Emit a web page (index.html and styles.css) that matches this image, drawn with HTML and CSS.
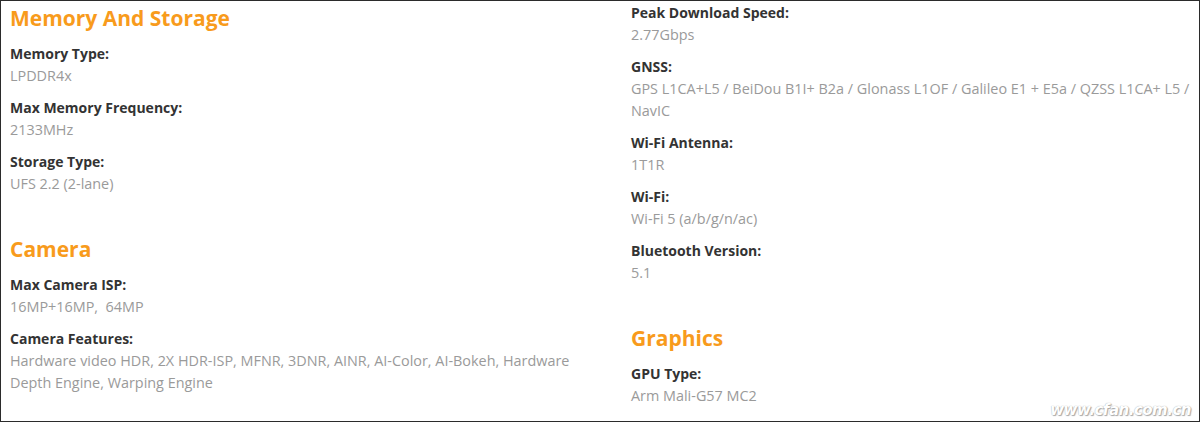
FILE: index.html
```html
<!DOCTYPE html>
<html>
<head>
<meta charset="utf-8">
<link rel="stylesheet" href="styles.css">
</head>
<body>
<div class="frame">
  <div class="col col-left">
    <h2 class="heading heading-first">Memory And Storage</h2>
    <div class="item"><div class="label">Memory Type:</div><div class="value">LPDDR4x</div></div>
    <div class="item"><div class="label">Max Memory Frequency:</div><div class="value">2133MHz</div></div>
    <div class="item"><div class="label">Storage Type:</div><div class="value">UFS 2.2 (2-lane)</div></div>
    <h2 class="heading">Camera</h2>
    <div class="item"><div class="label">Max Camera ISP:</div><div class="value">16MP+16MP,&nbsp;&nbsp;64MP</div></div>
    <div class="item"><div class="label">Camera Features:</div><div class="value value-wrap">Hardware video HDR, 2X HDR-ISP, MFNR, 3DNR, AINR, AI-Color, AI-Bokeh, Hardware Depth Engine, Warping Engine</div></div>
  </div>
  <div class="col col-right">
    <div class="item"><div class="label">Peak Download Speed:</div><div class="value">2.77Gbps</div></div>
    <div class="item"><div class="label">GNSS:</div><div class="value">GPS L1CA+L5 / BeiDou B1I+ B2a / Glonass L1OF / Galileo E1 + E5a / QZSS L1CA+ L5 /<br>NavIC</div></div>
    <div class="item"><div class="label">Wi-Fi Antenna:</div><div class="value">1T1R</div></div>
    <div class="item"><div class="label">Wi-Fi:</div><div class="value">Wi-Fi 5 (a/b/g/n/ac)</div></div>
    <div class="item"><div class="label">Bluetooth Version:</div><div class="value">5.1</div></div>
    <h2 class="heading">Graphics</h2>
    <div class="item"><div class="label">GPU Type:</div><div class="value">Arm Mali-G57 MC2</div></div>
  </div>
  <div class="watermark">www.cfan.com.cn</div>
</div>
</body>
</html>
```
FILE: styles.css
```css
html, body {
  margin: 0;
  padding: 0;
  background: #fff;
}
.frame {
  position: relative;
  box-sizing: border-box;
  width: 1200px;
  height: 422px;
  border: 1px solid #2b2b2b;
  padding: 1px 0 0 9px;
  display: grid;
  grid-template-columns: 621px 1fr;
  font-family: "Open Sans", "Liberation Sans", sans-serif;
  overflow: hidden;
}
.col {
  display: flex;
  flex-direction: column;
}
.heading {
  margin: 29px 0 10px 0;
  font-size: 21px;
  line-height: 30px;
  font-weight: 700;
  color: #f89b1c;
}
.heading-first {
  margin-top: 1px;
}
.item {
  margin-bottom: 10px;
}
.label {
  font-size: 14px;
  line-height: 22px;
  font-weight: 700;
  color: #333;
}
.value {
  font-size: 14.4px;
  line-height: 22px;
  color: #9a9a9a;
}
.value-wrap {
  width: 590px;
}
.watermark {
  position: absolute;
  right: 8px;
  bottom: 2px;
  font-family: "DejaVu Sans", sans-serif;
  font-size: 15px;
  font-weight: 700;
  font-style: italic;
  color: #fff;
  letter-spacing: -0.5px;
  text-shadow: 0 0 1px #999, 1px 1px 1px #aaa;
}
```
